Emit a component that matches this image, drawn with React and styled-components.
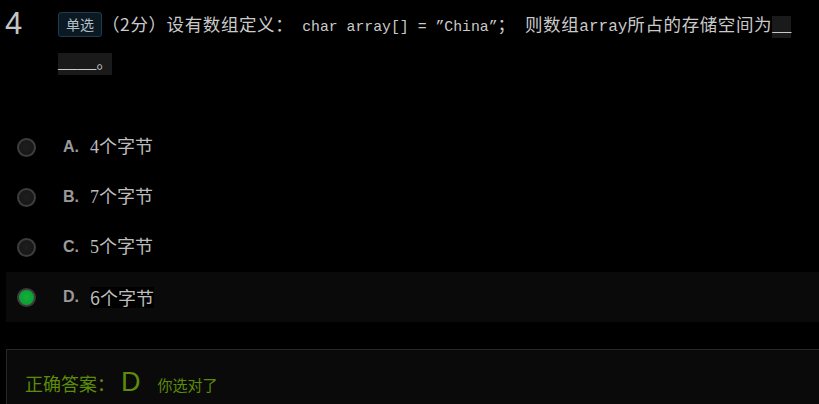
import styled, { createGlobalStyle } from "styled-components";

const GlobalStyle = createGlobalStyle`
  html, body {
    margin: 0;
    padding: 0;
    height: 100%;
    overflow: hidden;
    background: #000;
  }
  body {
    font-family: "Noto Sans CJK SC", "Liberation Sans", sans-serif;
    color: #c8c8c8;
  }
`;

const options = [
  { key: "A", text: "4个字节" },
  { key: "B", text: "7个字节" },
  { key: "C", text: "5个字节" },
  { key: "D", text: "6个字节", checked: true },
];

export default function App() {
  return (
    <Page>
      <GlobalStyle />
      <Header>
        <Num>4</Num>
        <Stem>
          <Tag>单选</Tag>
          （2分）设有数组定义：<Code> char array[] = ”China”</Code>；{"\u2002"}则数组
          <Code $wide>array</Code>所占的存储空间为<Blank>______。</Blank>
        </Stem>
      </Header>

      <OptionList>
        {options.map((o) => (
          <Option key={o.key} $checked={o.checked}>
            <Radio $checked={o.checked} />
            <Letter>{o.key}.</Letter>
            <OptText $checked={o.checked}>{o.text}</OptText>
          </Option>
        ))}
      </OptionList>

      <AnswerBox>
        <AnswerLabel>正确答案：</AnswerLabel>
        <AnswerKey>D</AnswerKey>
        <AnswerNote>你选对了</AnswerNote>
      </AnswerBox>
    </Page>
  );
}

const Page = styled.div`
  background: #000;
  min-height: 404px;
  padding-top: 5px;
`;

const Header = styled.div`
  display: flex;
  align-items: flex-start;
`;

const Num = styled.div`
  width: 53px;
  padding-left: 5px;
  flex-shrink: 0;
  font-family: "Liberation Sans", Arial, sans-serif;
  font-size: 31px;
  line-height: 37px;
  color: #c4c4c4;
`;

const Stem = styled.div`
  width: 736px;
  height: 74px;
  font-size: 17.5px;
  letter-spacing: 0.6px;
  line-height: 37px;
  color: #cacaca;
  word-break: break-all;
`;

const Tag = styled.span`
  display: inline-block;
  height: 23px;
  line-height: 23px;
  padding: 0 7px;
  font-size: 14px;
  letter-spacing: 0;
  color: #b4bcc4;
  background: #0b1923;
  border: 1px solid #1d3a50;
  border-radius: 3px;
  vertical-align: 1px;
`;

const Code = styled.span`
  font-family: "Liberation Mono", "Courier New", monospace;
  font-size: ${(p) => (p.$wide ? "16px" : "14.8px")};
  letter-spacing: 0;
  line-height: 1;
`;

const Blank = styled.span`
  font-family: "Liberation Mono", "Noto Sans CJK SC", monospace;
  font-size: 16px;
  letter-spacing: 0;
  line-height: 1;
  background: #1a1a1a;
  padding: 2px 0;
`;

const OptionList = styled.div`
  margin-top: 43px;
  display: flex;
  flex-direction: column;
`;

const Option = styled.div`
  display: flex;
  align-items: center;
  height: 50px;
  margin-left: 6px;
  padding-left: 11px;
  background: ${(p) => (p.$checked ? "#0a0a0a" : "transparent")};
`;

const Radio = styled.span`
  width: 15px;
  height: 15px;
  border-radius: 50%;
  border: 2px solid #3d3d3d;
  background: ${(p) =>
    p.$checked
      ? "radial-gradient(circle at 50% 45%, #12b03a, #0a9630)"
      : "radial-gradient(circle at 50% 45%, #1e1e1e, #141414)"};
  box-shadow: inset 0 0 1px rgba(255, 255, 255, 0.08);
  flex-shrink: 0;
`;

const Letter = styled.span`
  margin-left: 27px;
  width: 27px;
  font-family: "Liberation Sans", Arial, sans-serif;
  font-weight: bold;
  font-size: 16px;
  color: #9a9a9a;
`;

const OptText = styled.span`
  font-family: ${(p) =>
    p.$checked
      ? `"Noto Sans CJK SC", "Liberation Sans", sans-serif`
      : `"Liberation Serif", "Noto Sans CJK SC", serif`};
  font-size: 18px;
  line-height: 21px;
  color: #bdbdbd;
  background: ${(p) => (p.$checked ? "#000" : "transparent")};
`;

const AnswerBox = styled.div`
  margin-top: 27px;
  margin-left: 6px;
  height: 80px;
  padding: 17px 0 0 18px;
  background: #0a0a0a;
  border: 1px solid #272727;
  border-right: none;
  display: flex;
  align-items: baseline;
  color: #5c8c08;
`;

const AnswerLabel = styled.span`
  font-size: 18px;
  line-height: 30px;
`;

const AnswerKey = styled.span`
  font-family: "Liberation Sans", Arial, sans-serif;
  font-size: 27px;
  line-height: 30px;
  margin-left: 6px;
  margin-right: 17px;
`;

const AnswerNote = styled.span`
  font-size: 15px;
  line-height: 30px;
`;
